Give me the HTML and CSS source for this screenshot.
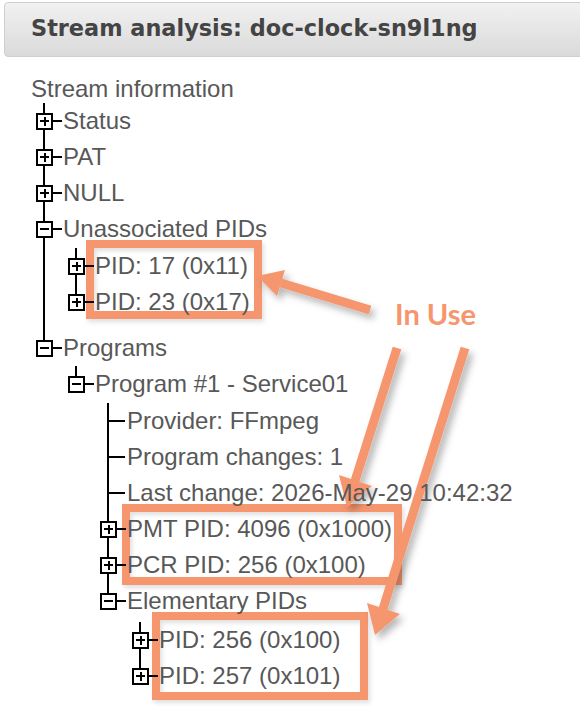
FILE: index.html
```html
<!DOCTYPE html>
<html lang="en">
<head>
    <meta charset="UTF-8">
    <meta name="viewport" content="width=device-width, initial-scale=1.0">
    <title>Stream analysis</title>
    <link rel="stylesheet" href="styles.css">
</head>
<body>
    <div class="page">
        <div class="panel-title">Stream analysis: doc-clock-sn9l1ng</div>

        <div class="tree">
            <div class="root">Stream information</div>
            <ul class="branch top">
                <li><div class="row"><span class="toggle plus"></span><span class="stem"></span><span class="label">Status</span></div></li>
                <li><div class="row"><span class="toggle plus"></span><span class="stem"></span><span class="label">PAT</span></div></li>
                <li><div class="row"><span class="toggle plus"></span><span class="stem"></span><span class="label">NULL</span></div></li>
                <li>
                    <div class="row"><span class="toggle minus"></span><span class="stem"></span><span class="label">Unassociated PIDs</span></div>
                    <ul class="branch unassoc">
                        <li><div class="row"><span class="toggle plus"></span><span class="stem"></span><span class="label">PID: 17 (0x11)</span></div></li>
                        <li><div class="row"><span class="toggle plus"></span><span class="stem"></span><span class="label">PID: 23 (0x17)</span></div></li>
                    </ul>
                </li>
                <li>
                    <div class="row"><span class="toggle minus"></span><span class="stem"></span><span class="label">Programs</span></div>
                    <ul class="branch">
                        <li>
                            <div class="row"><span class="toggle minus"></span><span class="stem"></span><span class="label">Program #1 - Service01</span></div>
                            <ul class="branch program">
                                <li class="leaf"><div class="row"><span class="stem"></span><span class="label">Provider: FFmpeg</span></div></li>
                                <li class="leaf"><div class="row"><span class="stem"></span><span class="label">Program changes: 1</span></div></li>
                                <li class="leaf"><div class="row"><span class="stem"></span><span class="label">Last change: 2026-May-29 10:42:32</span></div></li>
                                <li><div class="row"><span class="toggle plus"></span><span class="stem"></span><span class="label">PMT PID: 4096 (0x1000)</span></div></li>
                                <li><div class="row"><span class="toggle plus"></span><span class="stem"></span><span class="label">PCR PID: 256 (0x100)</span></div></li>
                                <li>
                                    <div class="row"><span class="toggle minus"></span><span class="stem"></span><span class="label">Elementary PIDs</span></div>
                                    <ul class="branch elementary">
                                        <li><div class="row"><span class="toggle plus"></span><span class="stem"></span><span class="label">PID: 256 (0x100)</span></div></li>
                                        <li><div class="row"><span class="toggle plus"></span><span class="stem"></span><span class="label">PID: 257 (0x101)</span></div></li>
                                    </ul>
                                </li>
                            </ul>
                        </li>
                    </ul>
                </li>
            </ul>
        </div>

        <!-- annotation layer drawn over the screenshot -->
        <svg class="marks" width="580" height="714" viewBox="0 0 580 714">
            <defs>
                <filter id="shade" x="-20%" y="-20%" width="140%" height="140%">
                    <feDropShadow dx="4" dy="5" stdDeviation="3.5" flood-color="#000" flood-opacity="0.28"/>
                </filter>
                <filter id="glow" x="-10%" y="-10%" width="120%" height="120%">
                    <feDropShadow dx="2" dy="3" stdDeviation="2" flood-color="#000" flood-opacity="0.12"/>
                </filter>
            </defs>
            <g fill="none" stroke="#f5966e" stroke-width="8" filter="url(#glow)">
                <rect x="90" y="244" width="168" height="71"/>
                <rect x="126" y="508" width="272" height="73"/>
                <rect x="156" y="616" width="208" height="80"/>
            </g>
            <g filter="url(#shade)">
                <line x1="370" y1="310" x2="281" y2="283" stroke="#f5966e" stroke-width="9"/>
                <polygon points="257,276 285,270 277,296" fill="#f5966e"/>
                <line x1="397" y1="348" x2="355" y2="481" stroke="#f5966e" stroke-width="9"/>
                <polygon points="347,507 372,486 339,475" fill="#f5966e"/>
                <line x1="465" y1="348" x2="383" y2="609" stroke="#f5966e" stroke-width="9"/>
                <polygon points="375,635 400,614 367,603" fill="#f5966e"/>
            </g>
        </svg>
        <div class="callout">In Use</div>
    </div>
</body>
</html>
```

FILE: styles.css
```css
body {
    margin: 0;
    background-color: #fff;
    overflow: hidden;
}
.page {
    position: relative;
    width: 580px;
    height: 714px;
    overflow: hidden;
}
.panel-title {
    margin: 2px -12px 0 4px;
    height: 53px;
    padding-left: 26px;
    border: 1px solid #cfcfcf;
    border-radius: 4px;
    background: linear-gradient(#f1f1f1, #dadada);
    font: bold 22.4px "DejaVu Sans", sans-serif;
    line-height: 51px;
    color: #444;
}
.tree {
    margin-top: 18px;
    padding-left: 31px;
    font: 24px "Liberation Sans", Arial, sans-serif;
    color: #585858;
}
.root {
    line-height: 28px;
}
.branch {
    list-style: none;
    margin: 0;
    padding: 0 0 0 32px;
}
.branch.top {
    padding-left: 5px;
}
.branch.unassoc {
    padding-top: 1px;
    padding-bottom: 10px;
}
.branch.program {
    padding-top: 1px;
}
.branch.elementary {
    padding-top: 3px;
}
.branch li {
    position: relative;
}
/* vertical guide line */
.branch li::before {
    content: "";
    position: absolute;
    left: 7px;
    top: 0;
    bottom: 0;
    width: 2px;
    background-color: #000;
}
.branch li:last-child::before {
    bottom: auto;
    height: 18px;
}
.row {
    position: relative;
    z-index: 1;
    display: flex;
    align-items: center;
    height: 36px;
    white-space: nowrap;
}
.toggle {
    position: relative;
    box-sizing: border-box;
    width: 17px;
    height: 17px;
    border: 2px solid #000;
    background-color: #fff;
    flex: none;
}
.toggle::before {
    content: "";
    position: absolute;
    left: 2px;
    right: 2px;
    top: 5.5px;
    height: 2px;
    background-color: #000;
}
.toggle.plus::after {
    content: "";
    position: absolute;
    top: 2px;
    bottom: 2px;
    left: 5.5px;
    width: 2px;
    background-color: #000;
}
.stem {
    width: 9px;
    height: 2px;
    margin-right: 1px;
    background-color: #000;
    flex: none;
}
.leaf .row {
    padding-left: 9px;
}
.leaf .stem {
    width: 16px;
    margin-right: 2px;
}
.marks {
    position: absolute;
    left: 0;
    top: 0;
    pointer-events: none;
}
.callout {
    position: absolute;
    left: 395px;
    top: 297px;
    font: bold 29px Lato, sans-serif;
    line-height: 1.2;
    color: #f5966e;
}
```
